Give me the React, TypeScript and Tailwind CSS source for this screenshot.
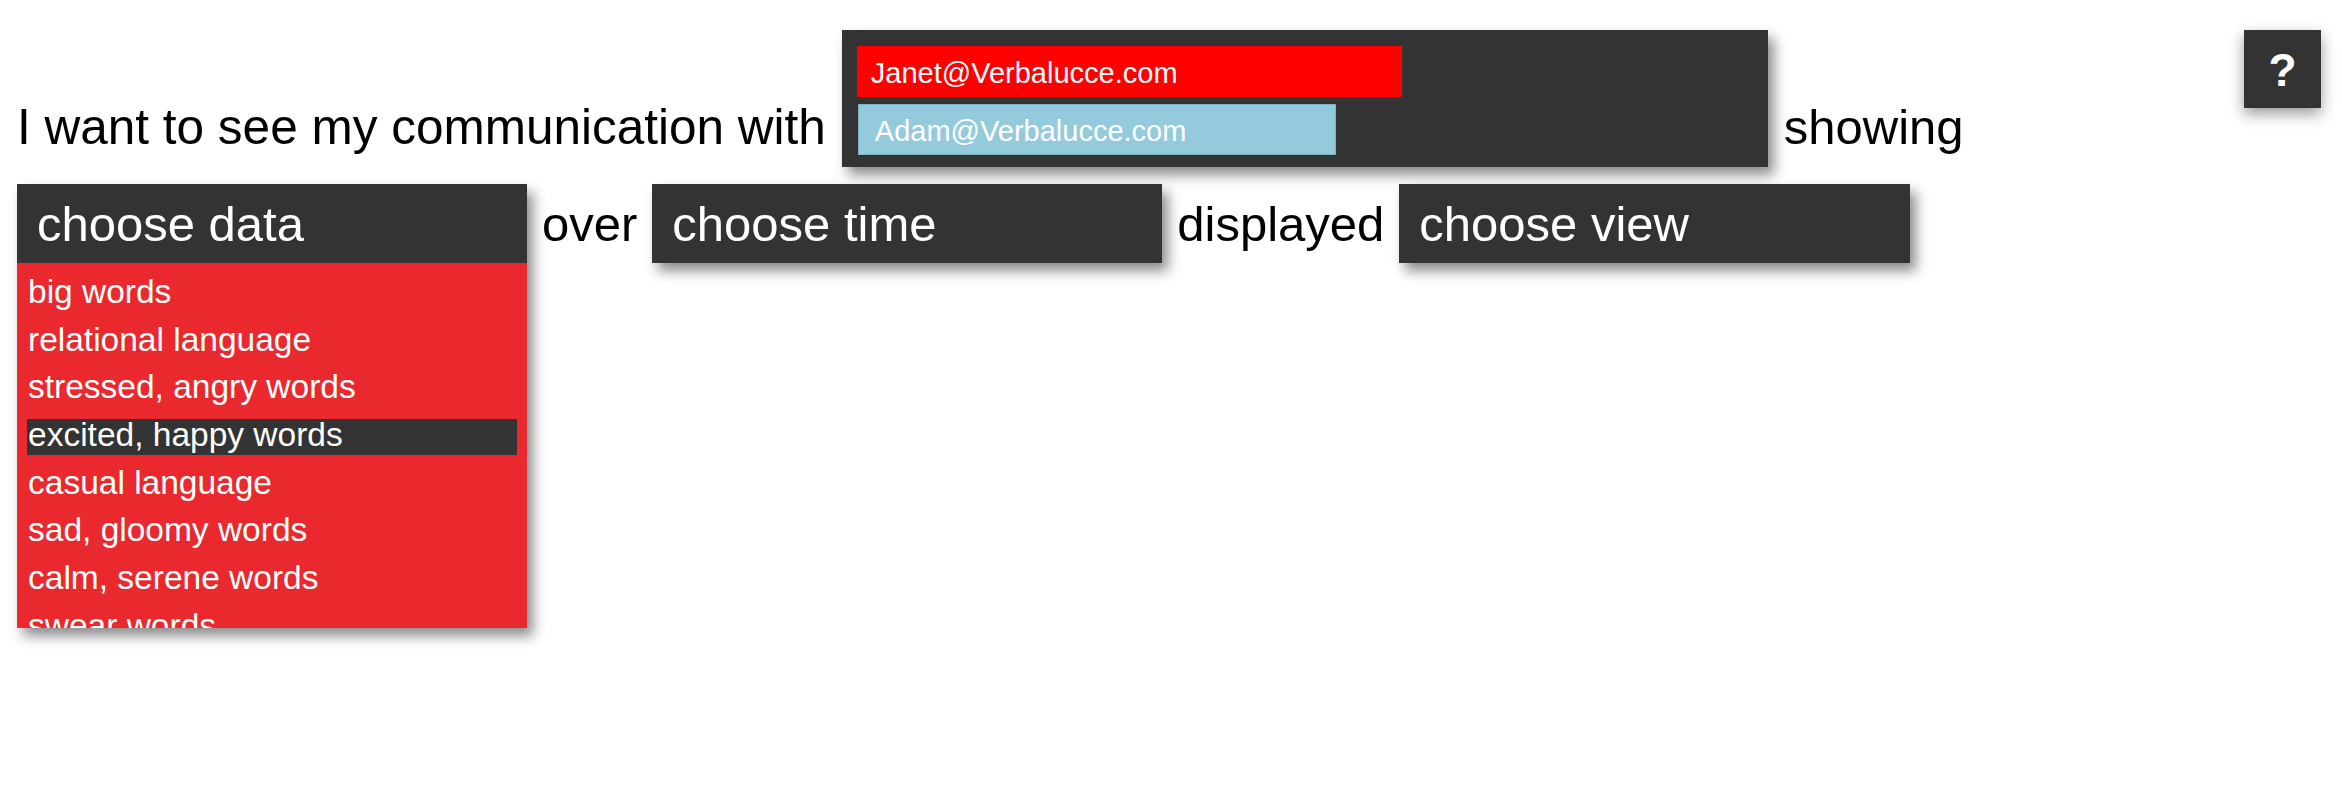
const dataOptions = [
  'big words',
  'relational language',
  'stressed, angry words',
  'excited, happy words',
  'casual language',
  'sad, gloomy words',
  'calm, serene words',
  'swear words',
];

export default function App() {
  const selected = 'excited, happy words';

  return (
    <div className="min-h-[785px] bg-white font-['Liberation_Sans',Arial,sans-serif] text-black">
      <div className="flex items-start justify-between pl-[17px] pr-[21px] pt-[30px]">
        <div className="flex flex-col">
          {/* Line 1: people picker */}
          <div className="flex gap-[16px] [align-items:last_baseline]">
            <span className="translate-y-[3px] text-[49.5px] leading-none">I want to see my communication with</span>
            <div className="w-[926px] bg-[#333333] px-[15px] pt-[16px] pb-[12px] shadow-[6px_8px_12px_rgba(0,0,0,0.45)]">
              <div className="flex flex-col gap-[7px]">
                <div className="h-[51px] w-[545px] bg-[#ff0000] pl-[14px] pt-[4px] text-[29px] leading-[47px] text-white">
                  Janet@Verbalucce.com
                </div>
                <div className="ml-px h-[51px] w-[478px] border border-[#7fb3c4] bg-[#94cbdc] pl-[16px] pt-[5px] text-[29px] leading-[43px] text-white">
                  Adam@Verbalucce.com
                </div>
              </div>
            </div>
            <span className="translate-y-[3px] text-[49px] leading-none">showing</span>
          </div>

          {/* Line 2: data / time / view */}
          <div className="mt-[17px] flex items-baseline gap-[15px]">
            <div className="flex w-[510px] flex-col shadow-[6px_8px_12px_rgba(0,0,0,0.45)]">
              <div className="h-[79px] bg-[#333333] pl-[20px] pt-px text-[49px] leading-[78px] text-white">choose data</div>
              <div className="flex h-[365px] flex-col gap-[11.7px] overflow-hidden bg-[#e9292d] pt-[13px]">
                {dataOptions.map((opt) => (
                  <div
                    key={opt}
                    className={`mx-[10px] h-[36px] shrink-0 px-px text-[33.5px] leading-[31px] text-white ${
                      opt === selected ? 'bg-[#333333]' : ''
                    }`}
                  >
                    {opt}
                  </div>
                ))}
              </div>
            </div>
            <span className="text-[49px] leading-none">over</span>
            <div className="h-[79px] w-[510px] bg-[#333333] pl-[20px] pt-px text-[49px] leading-[78px] text-white shadow-[6px_8px_12px_rgba(0,0,0,0.45)]">
              choose time
            </div>
            <span className="text-[49px] leading-none">displayed</span>
            <div className="h-[79px] w-[511px] bg-[#333333] pl-[20px] pt-px text-[49px] leading-[78px] text-white shadow-[6px_8px_12px_rgba(0,0,0,0.45)]">
              choose view
            </div>
          </div>
        </div>

        {/* Help */}
        <button className="flex h-[78px] w-[77px] items-center justify-center bg-[#333333] pt-[2px] text-[46px] font-bold text-white shadow-[0_6px_14px_rgba(0,0,0,0.4)]">
          ?
        </button>
      </div>
    </div>
  );
}
